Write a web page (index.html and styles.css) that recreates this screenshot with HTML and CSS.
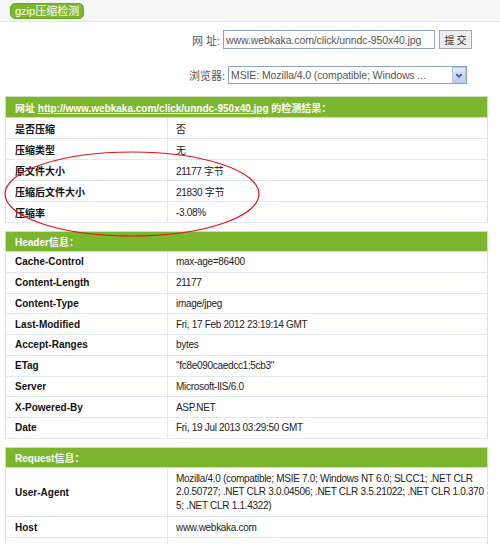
FILE: index.html
```html
<!DOCTYPE html>
<html>
<head>
<meta charset="utf-8">
<link rel="stylesheet" href="styles.css">
</head>
<body>
<div class="topbar"><span class="tag">gzip压缩检测</span></div>
<div class="form">
  <div class="frow row1">
    <span class="lbl">网 址:</span>
    <input class="url" type="text" value="www.webkaka.com/click/unndc-950x40.jpg" readonly>
    <button class="btn">提 交</button>
  </div>
  <div class="frow row2">
    <span class="lbl">浏览器:</span>
    <div class="select">
      <span class="seltext">MSIE: Mozilla/4.0 (compatible; Windows ...</span>
      <span class="arrow"><svg width="13" height="15" viewBox="0 0 13 15"><path d="M3.5 6 L6.5 9 L9.5 6" fill="none" stroke="#3f5680" stroke-width="1.6"/></svg></span>
    </div>
  </div>
</div>
<div class="results">
  <table class="tbl first">
    <tr><th colspan="2">网址 <a>http://www.webkaka.com/click/unndc-950x40.jpg</a> 的检测结果：</th></tr>
    <tr><td class="k">是否压缩</td><td class="v">否</td></tr>
    <tr><td class="k">压缩类型</td><td class="v">无</td></tr>
    <tr><td class="k">原文件大小</td><td class="v">21177 字节</td></tr>
    <tr><td class="k">压缩后文件大小</td><td class="v">21830 字节</td></tr>
    <tr><td class="k">压缩率</td><td class="v">-3.08%</td></tr>
  </table>
  <table class="tbl compact">
    <tr><th colspan="2">Header信息：</th></tr>
    <tr><td class="k">Cache-Control</td><td class="v">max-age=86400</td></tr>
    <tr><td class="k">Content-Length</td><td class="v">21177</td></tr>
    <tr><td class="k">Content-Type</td><td class="v">image/jpeg</td></tr>
    <tr><td class="k">Last-Modified</td><td class="v">Fri, 17 Feb 2012 23:19:14 GMT</td></tr>
    <tr><td class="k">Accept-Ranges</td><td class="v">bytes</td></tr>
    <tr><td class="k">ETag</td><td class="v">"fc8e090caedcc1:5cb3"</td></tr>
    <tr><td class="k">Server</td><td class="v">Microsoft-IIS/6.0</td></tr>
    <tr><td class="k">X-Powered-By</td><td class="v">ASP.NET</td></tr>
    <tr><td class="k">Date</td><td class="v">Fri, 19 Jul 2013 03:29:50 GMT</td></tr>
  </table>
  <table class="tbl compact">
    <tr><th colspan="2">Request信息：</th></tr>
    <tr><td class="k">User-Agent</td><td class="v multi"><span class="ln">Mozilla/4.0 (compatible; MSIE 7.0; Windows NT 6.0; SLCC1; .NET CLR</span><span class="ln">2.0.50727; .NET CLR 3.0.04506; .NET CLR 3.5.21022; .NET CLR 1.0.370</span><span class="ln">5; .NET CLR 1.1.4322)</span></td></tr>
    <tr><td class="k">Host</td><td class="v">www.webkaka.com</td></tr>
    <tr><td class="k"></td><td class="v"></td></tr>
  </table>
  <svg class="ring" width="270" height="92" viewBox="0 0 270 92"><ellipse cx="132" cy="45" rx="127" ry="42" fill="none" stroke="#e3141c" stroke-width="1.2"/></svg>
</div>
</body>
</html>
```
FILE: styles.css
```css
html, body {
  margin: 0;
  padding: 0;
  background: #fff;
  font-family: "Liberation Sans", "Noto Sans CJK SC", sans-serif;
  font-size: 10px;
  color: #222;
}
.topbar {
  height: 22px;
  background: #f6f6f6;
  border-bottom: 1px solid #e6e6e6;
  box-sizing: border-box;
  padding-top: 3px;
  padding-left: 10px;
}
.tag {
  display: inline-block;
  height: 16px;
  line-height: 15px;
  padding: 0 4px;
  background: #7cb62f;
  border: 1px solid #6ea526;
  box-sizing: border-box;
  border-radius: 5px;
  color: #fff;
  font-size: 11px;
}
.form {
  padding-top: 8px;
}
.frow {
  display: flex;
  justify-content: flex-end;
  align-items: center;
}
.row1 {
  padding-right: 28px;
  height: 19px;
}
.row2 {
  margin-top: 17px;
  padding-right: 33px;
  height: 18px;
}
.lbl {
  font-size: 11px;
  color: #555;
  margin-right: 3px;
}
.url {
  width: 212px;
  height: 19px;
  box-sizing: border-box;
  border: 1px solid #8aa5c2;
  padding: 0 2px;
  font-family: "Liberation Sans", sans-serif;
  font-size: 10.5px;
  letter-spacing: -0.1px;
  color: #555;
  outline: none;
  margin: 0;
}
.btn {
  width: 33px;
  height: 19px;
  margin: 0 0 0 4px;
  padding: 0;
  box-sizing: border-box;
  border: 1px solid #a9a9a9;
  background: #efefef;
  font-family: "Noto Sans CJK SC", sans-serif;
  font-size: 10px;
  color: #333;
}
.select {
  width: 239px;
  height: 18px;
  box-sizing: border-box;
  border: 1px solid #8aa5c2;
  display: flex;
  align-items: center;
  justify-content: space-between;
  padding-left: 2px;
  font-size: 10.5px;
  letter-spacing: -0.1px;
  color: #555;
}
.seltext {
  white-space: nowrap;
  overflow: hidden;
}
.arrow {
  width: 14px;
  height: 16px;
  background: linear-gradient(#dde8fb, #b9cdf0);
  border: 1px solid #b3c6e8;
  box-sizing: border-box;
  display: flex;
  align-items: center;
  justify-content: center;
}
.results {
  position: relative;
  margin-top: 12px;
  padding-left: 5px;
}
.tbl {
  width: 483px;
  border-collapse: collapse;
  border: 1px solid #d7e2ee;
  margin-bottom: 8px;
}
.tbl th {
  height: 20px;
  padding: 0 0 0 9px;
  background: #7cb62f;
  color: #fff;
  font-weight: bold;
  text-align: left;
  font-size: 10px;
  border: 1px solid #cfdcc0;
}
.tbl.compact th {
  height: 19px;
}
.tbl th a {
  text-decoration: underline;
  color: #fff;
}
.tbl td {
  height: 20px;
  border-top: 1px solid #dfe7f1;
  border-bottom: 1px solid #dfe7f1;
  padding: 0;
}
.tbl.compact td {
  height: 19.75px;
}
.tbl td.k {
  width: 152px;
  padding-left: 9px;
  font-weight: bold;
  color: #111;
  border-right: 1px solid #dfe7f1;
}
.tbl td.v {
  padding-left: 8px;
  color: #222;
  letter-spacing: -0.3px;
}
.tbl td.multi {
  line-height: 13.5px;
  padding-top: 4px;
  padding-bottom: 4px;
}
.ln {
  display: block;
  white-space: nowrap;
}
.ring {
  position: absolute;
  left: 0;
  top: 53px;
  pointer-events: none;
}
```
